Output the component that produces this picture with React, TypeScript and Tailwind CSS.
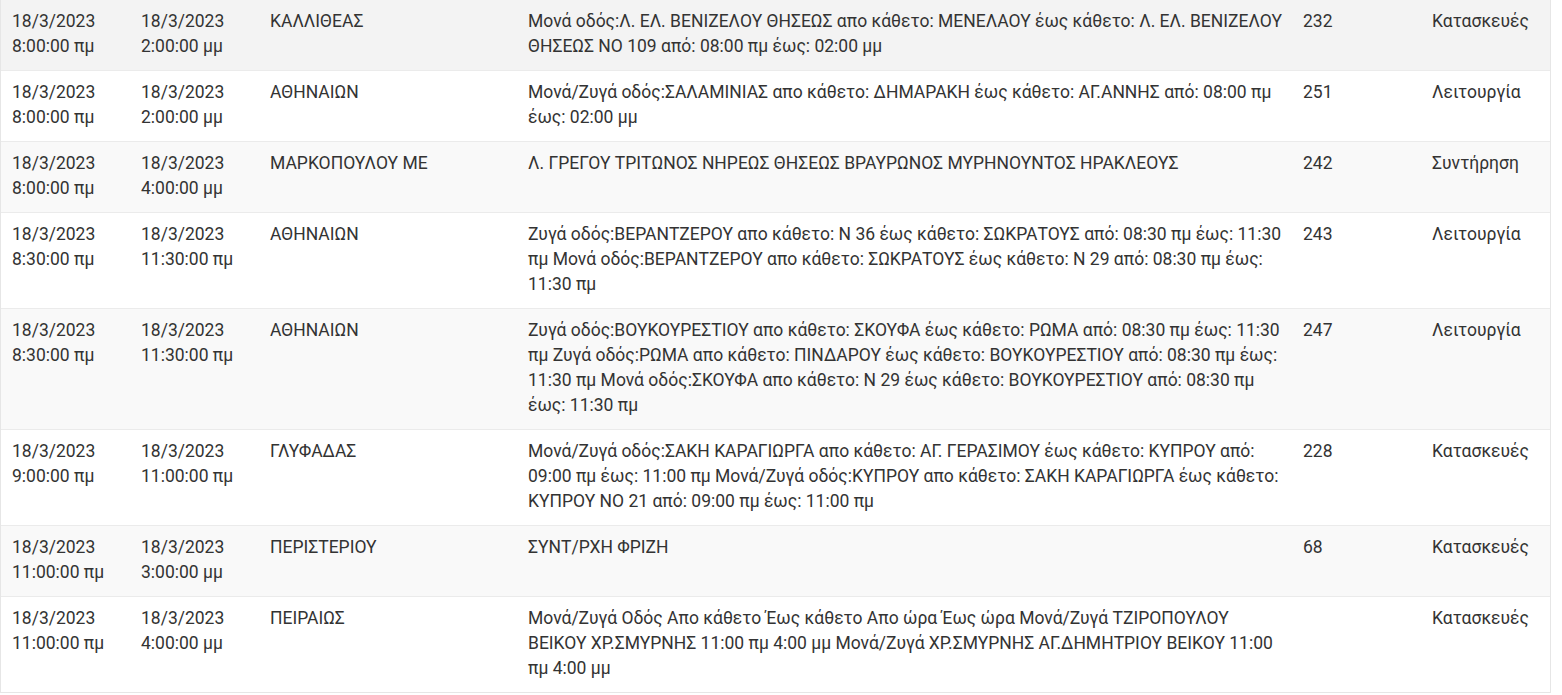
type Row = {
  from: [string, string];
  to: [string, string];
  area: string;
  desc: string[];
  code: string;
  kind: string;
};

const rows: Row[] = [
  {
    from: ["18/3/2023", "8:00:00 πμ"],
    to: ["18/3/2023", "2:00:00 μμ"],
    area: "ΚΑΛΛΙΘΕΑΣ",
    desc: [
      "Μονά οδός:Λ. ΕΛ. ΒΕΝΙΖΕΛΟΥ ΘΗΣΕΩΣ απο κάθετο: ΜΕΝΕΛΑΟΥ έως κάθετο: Λ. ΕΛ. ΒΕΝΙΖΕΛΟΥ",
      "ΘΗΣΕΩΣ ΝΟ 109 από: 08:00 πμ έως: 02:00 μμ",
    ],
    code: "232",
    kind: "Κατασκευές",
  },
  {
    from: ["18/3/2023", "8:00:00 πμ"],
    to: ["18/3/2023", "2:00:00 μμ"],
    area: "ΑΘΗΝΑΙΩΝ",
    desc: [
      "Μονά/Ζυγά οδός:ΣΑΛΑΜΙΝΙΑΣ απο κάθετο: ΔΗΜΑΡΑΚΗ έως κάθετο: ΑΓ.ΑΝΝΗΣ από: 08:00 πμ",
      "έως: 02:00 μμ",
    ],
    code: "251",
    kind: "Λειτουργία",
  },
  {
    from: ["18/3/2023", "8:00:00 πμ"],
    to: ["18/3/2023", "4:00:00 μμ"],
    area: "ΜΑΡΚΟΠΟΥΛΟΥ ΜΕ",
    desc: ["Λ. ΓΡΕΓΟΥ ΤΡΙΤΩΝΟΣ ΝΗΡΕΩΣ ΘΗΣΕΩΣ ΒΡΑΥΡΩΝΟΣ ΜΥΡΗΝΟΥΝΤΟΣ ΗΡΑΚΛΕΟΥΣ"],
    code: "242",
    kind: "Συντήρηση",
  },
  {
    from: ["18/3/2023", "8:30:00 πμ"],
    to: ["18/3/2023", "11:30:00 πμ"],
    area: "ΑΘΗΝΑΙΩΝ",
    desc: [
      "Ζυγά οδός:ΒΕΡΑΝΤΖΕΡΟΥ απο κάθετο: Ν 36 έως κάθετο: ΣΩΚΡΑΤΟΥΣ από: 08:30 πμ έως: 11:30",
      "πμ Μονά οδός:ΒΕΡΑΝΤΖΕΡΟΥ απο κάθετο: ΣΩΚΡΑΤΟΥΣ έως κάθετο: Ν 29 από: 08:30 πμ έως:",
      "11:30 πμ",
    ],
    code: "243",
    kind: "Λειτουργία",
  },
  {
    from: ["18/3/2023", "8:30:00 πμ"],
    to: ["18/3/2023", "11:30:00 πμ"],
    area: "ΑΘΗΝΑΙΩΝ",
    desc: [
      "Ζυγά οδός:ΒΟΥΚΟΥΡΕΣΤΙΟΥ απο κάθετο: ΣΚΟΥΦΑ έως κάθετο: ΡΩΜΑ από: 08:30 πμ έως: 11:30",
      "πμ Ζυγά οδός:ΡΩΜΑ απο κάθετο: ΠΙΝΔΑΡΟΥ έως κάθετο: ΒΟΥΚΟΥΡΕΣΤΙΟΥ από: 08:30 πμ έως:",
      "11:30 πμ Μονά οδός:ΣΚΟΥΦΑ απο κάθετο: Ν 29 έως κάθετο: ΒΟΥΚΟΥΡΕΣΤΙΟΥ από: 08:30 πμ",
      "έως: 11:30 πμ",
    ],
    code: "247",
    kind: "Λειτουργία",
  },
  {
    from: ["18/3/2023", "9:00:00 πμ"],
    to: ["18/3/2023", "11:00:00 πμ"],
    area: "ΓΛΥΦΑΔΑΣ",
    desc: [
      "Μονά/Ζυγά οδός:ΣΑΚΗ ΚΑΡΑΓΙΩΡΓΑ απο κάθετο: ΑΓ. ΓΕΡΑΣΙΜΟΥ έως κάθετο: ΚΥΠΡΟΥ από:",
      "09:00 πμ έως: 11:00 πμ Μονά/Ζυγά οδός:ΚΥΠΡΟΥ απο κάθετο: ΣΑΚΗ ΚΑΡΑΓΙΩΡΓΑ έως κάθετο:",
      "ΚΥΠΡΟΥ ΝΟ 21 από: 09:00 πμ έως: 11:00 πμ",
    ],
    code: "228",
    kind: "Κατασκευές",
  },
  {
    from: ["18/3/2023", "11:00:00 πμ"],
    to: ["18/3/2023", "3:00:00 μμ"],
    area: "ΠΕΡΙΣΤΕΡΙΟΥ",
    desc: ["ΣΥΝΤ/ΡΧΗ ΦΡΙΖΗ"],
    code: "68",
    kind: "Κατασκευές",
  },
  {
    from: ["18/3/2023", "11:00:00 πμ"],
    to: ["18/3/2023", "4:00:00 μμ"],
    area: "ΠΕΙΡΑΙΩΣ",
    desc: [
      "Μονά/Ζυγά Οδός Απο κάθετο Έως κάθετο Απο ώρα Έως ώρα Μονά/Ζυγά ΤΖΙΡΟΠΟΥΛΟΥ",
      "ΒΕΙΚΟΥ ΧΡ.ΣΜΥΡΝΗΣ 11:00 πμ 4:00 μμ Μονά/Ζυγά ΧΡ.ΣΜΥΡΝΗΣ ΑΓ.ΔΗΜΗΤΡΙΟΥ ΒΕΙΚΟΥ 11:00",
      "πμ 4:00 μμ",
    ],
    code: "",
    kind: "Κατασκευές",
  },
];

function Lines({ items }: { items: string[] }) {
  return (
    <>
      {items.map((line, i) => (
        <div key={i} className="whitespace-nowrap">
          {line}
        </div>
      ))}
    </>
  );
}

export default function App() {
  return (
    <div className="min-h-screen bg-white font-['Roboto','Liberation_Sans',sans-serif] text-[17.5px] leading-[25px] text-[#333]">
      <div className="w-[1551px] border-x border-b border-[#e6e6e6]">
        {rows.map((row, i) => {
          const bg = i === 0 ? "bg-[#f3f3f3]" : i % 2 === 0 ? "bg-[#f9f9f9]" : "bg-white";
          return (
            <div
              key={i}
              className={`flex border-b border-[#ebebeb] last:border-b-0 ${bg}`}
            >
              <div className="w-[129px] shrink-0 pb-[11px] pl-[11px] pr-[8px] pt-[9px]">
                <Lines items={row.from} />
              </div>
              <div className="w-[129px] shrink-0 pb-[11px] pl-[11px] pr-[8px] pt-[9px]">
                <Lines items={row.to} />
              </div>
              <div className="w-[258px] shrink-0 pb-[11px] pl-[11px] pr-[8px] pt-[9px]">
                {row.area}
              </div>
              <div className="w-[775px] shrink-0 pb-[11px] pl-[11px] pr-[8px] pt-[9px]">
                <Lines items={row.desc} />
              </div>
              <div className="w-[129px] shrink-0 pb-[11px] pl-[11px] pr-[8px] pt-[9px]">
                {row.code}
              </div>
              <div className="flex-1 pb-[11px] pl-[11px] pr-[8px] pt-[9px]">
                {row.kind}
              </div>
            </div>
          );
        })}
      </div>
    </div>
  );
}
